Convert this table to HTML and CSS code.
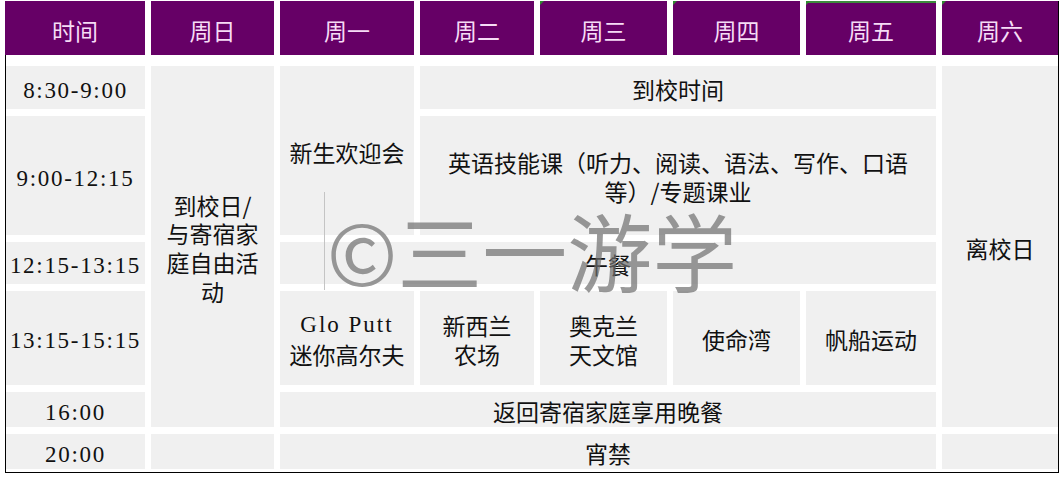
FILE: index.html
```html
<!DOCTYPE html>
<html>
<head>
    <meta charset="utf-8">
    <meta name="viewport" content="width=device-width, initial-scale=1">
    <title>课程安排</title>
    <link rel="stylesheet" href="styles.css">
</head>
<body>
    <div class="sheet">
        <div class="head first">时间</div>
        <div class="head">周日</div>
        <div class="head">周一</div>
        <div class="head">周二</div>
        <div class="head flag">周三</div>
        <div class="head flag">周四</div>
        <div class="head flag edge">周五</div>
        <div class="head flag">周六</div>

        <!-- 8:30 -->
        <div class="cell time">8:30-9:00</div>
        <div class="cell rows-5 narrow">到校日/<br>与寄宿家庭自由活动</div>
        <div class="cell rows-2">新生欢迎会</div>
        <div class="cell cols-4">到校时间</div>
        <div class="cell rows-5">离校日</div>

        <!-- 9:00 -->
        <div class="cell time">9:00-12:15</div>
        <div class="cell cols-4">英语技能课（听力、阅读、语法、写作、口语<br>等）/专题课业</div>

        <!-- 12:15 -->
        <div class="cell time">12:15-13:15</div>
        <div class="cell cols-5">午餐</div>

        <!-- 13:15 -->
        <div class="cell time">13:15-15:15</div>
        <div class="cell"><p class="en">Glo Putt</p>迷你高尔夫</div>
        <div class="cell">新西兰<br>农场</div>
        <div class="cell">奥克兰<br>天文馆</div>
        <div class="cell">使命湾</div>
        <div class="cell">帆船运动</div>

        <!-- 16:00 -->
        <div class="cell time">16:00</div>
        <div class="cell cols-5">返回寄宿家庭享用晚餐</div>

        <!-- 20:00 -->
        <div class="cell time">20:00</div>
        <div class="cell"></div>
        <div class="cell cols-5">宵禁</div>
        <div class="cell"></div>

        <div class="mark">©三一游学</div>
    </div>
</body>
</html>
```

FILE: styles.css
```css
body {
    margin: 0;
    background: #fff;
    font-family: "Noto Sans CJK SC", sans-serif;
}
.sheet {
    position: relative;
    box-sizing: border-box;
    width: 1054px;
    margin: 1px 0 0 5px;
    padding-bottom: 3px;
    border: 1px solid #000;
    border-top: none;
    display: grid;
    grid-template-columns: 139px 123px 134px 114px 127px 127px 130px 116px;
    grid-template-rows: 58px 43px 119px 42px 94px 35px 35px;
    gap: 7px 6px;
}
.head {
    position: relative;
    margin-bottom: 4px;
    background-color: #660066;
    color: #f6dcf6;
    font-size: 23px;
    display: flex;
    align-items: center;
    justify-content: center;
    padding-top: 3px;
}
.head.first {
    margin-left: -1px;
}
.flag::before {
    content: "";
    position: absolute;
    top: 0;
    left: 0;
    border-top: 4px solid #2f8a2f;
    border-right: 4px solid transparent;
}
.edge {
    box-shadow: inset 0 2px 0 #3d8b3d;
}
.cell {
    background-color: #f0f0f0;
    color: #111;
    font-size: 23px;
    line-height: 1.25;
    text-align: center;
    display: flex;
    flex-direction: column;
    align-items: center;
    justify-content: center;
    padding-top: 3px;
}
.time,
.en {
    font-family: "Liberation Serif", "Noto Sans CJK SC", serif;
    letter-spacing: 1.7px;
}
.time {
    padding-top: 7px;
}
.en {
    margin: 0;
    letter-spacing: 2px;
}
.narrow {
    padding: 3px 8px 0;
}
.rows-2 {
    grid-row: span 2;
}
.rows-5 {
    grid-row: span 5;
}
.cols-4 {
    grid-column: span 4;
}
.cols-5 {
    grid-column: span 5;
}
.mark {
    position: absolute;
    top: 205px;
    left: 0;
    right: 0;
    text-align: center;
    font-size: 85px;
    line-height: 1;
    color: rgba(110, 110, 110, 0.7);
    white-space: nowrap;
    pointer-events: none;
}
.mark::before {
    content: "";
    position: absolute;
    left: 318px;
    top: -14px;
    height: 98px;
    border-left: 1px solid #c4c4c4;
}
```
